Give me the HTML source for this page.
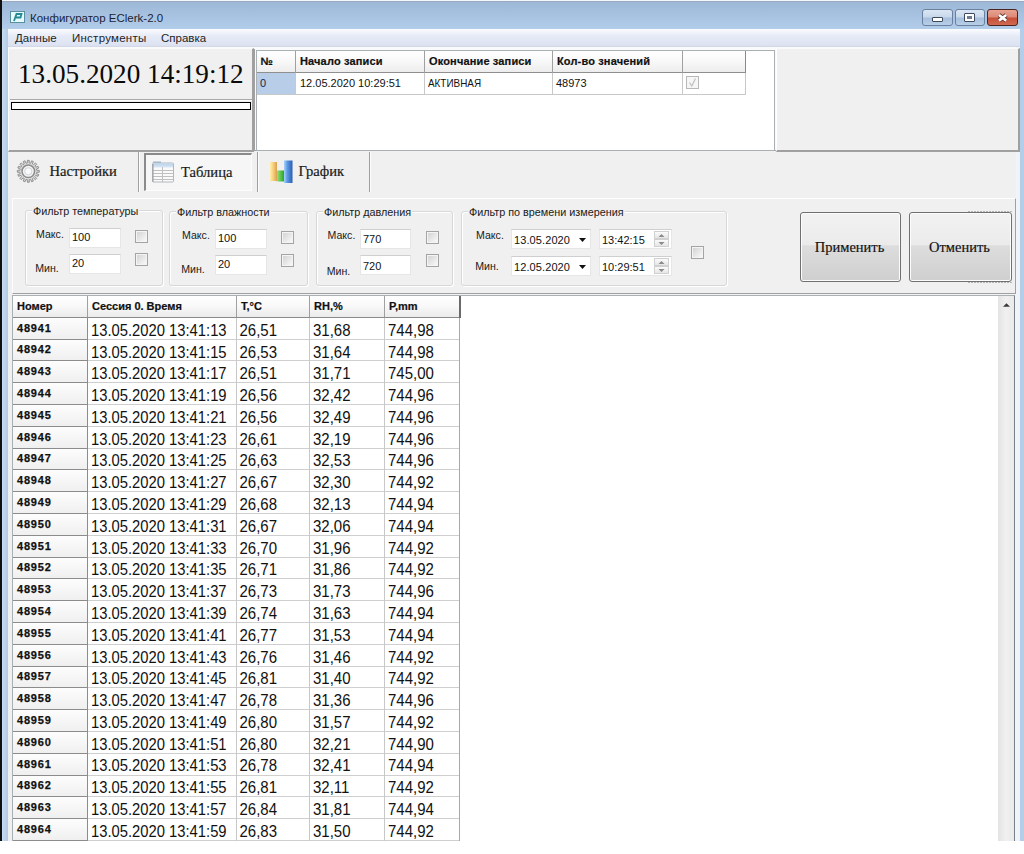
<!DOCTYPE html>
<html><head><meta charset="utf-8">
<style>
html,body{margin:0;padding:0;width:1024px;height:854px;overflow:hidden;background:#fff;position:relative}
.t{position:absolute;white-space:nowrap;line-height:1}
</style></head><body>
<div style="position:absolute;left:0px;top:0px;width:1024px;height:841px;background:#b4cde8"></div>
<div style="position:absolute;left:0px;top:0px;width:1.5px;height:841px;background:#111"></div>
<div style="position:absolute;left:2px;top:0px;width:1022px;height:29px;background:linear-gradient(#9db8d7 0,#9fbad8 15%,#aac6e4 70%,#b2cdea 100%)"></div>
<div style="position:absolute;left:2px;top:0px;width:1022px;height:1px;background:#f4f7fb"></div>
<div style="position:absolute;left:2px;top:1px;width:1022px;height:1px;background:#98a9bf"></div>
<div style="position:absolute;left:2px;top:29px;width:6px;height:812px;background:linear-gradient(90deg,#c8dcf0,#b2cae6)"></div>
<div style="position:absolute;left:1016px;top:29px;width:8px;height:812px;background:linear-gradient(90deg,#f2f5fa 0,#eef3f9 4px,#b4cde8 4px)"></div>
<div style="position:absolute;left:10px;top:11px;width:15px;height:12px;background:#e6fafd;border:1px solid #5a8fa0;box-sizing:border-box"></div>
<svg style="position:absolute;left:11px;top:12px" width="13" height="10"><path d="M3 9 L5.5 2 L10.5 2 L9.5 5.5 L5 5.5" fill="none" stroke="#258a92" stroke-width="1.8"/></svg>
<div class="t" style="left:30px;top:12.57px;font-family:'Liberation Sans', sans-serif;font-size:11.5px;font-weight:normal;color:#1b2433;">Конфигуратор EClerk-2.0</div>
<div style="position:absolute;left:922px;top:9px;width:31px;height:17px;box-sizing:border-box;border:1px solid #6a80a0;border-radius:3px;background:linear-gradient(#dbe6f3,#c9d9ec 45%,#a7bfdc 55%,#b9cfe8)"></div>
<div style="position:absolute;left:955px;top:9px;width:30px;height:17px;box-sizing:border-box;border:1px solid #6a80a0;border-radius:3px;background:linear-gradient(#dbe6f3,#c9d9ec 45%,#a7bfdc 55%,#b9cfe8)"></div>
<div style="position:absolute;left:987px;top:9px;width:31px;height:17px;box-sizing:border-box;border:1px solid #4a2420;border-radius:3px;background:linear-gradient(#e8a292,#dc8a76 45%,#c65038 55%,#d26a52)"></div>
<div style="position:absolute;left:932px;top:17px;width:11px;height:5px;background:#fff;border:1px solid #3c4a5e;box-sizing:border-box;border-radius:1px"></div>
<div style="position:absolute;left:964px;top:13px;width:11px;height:9px;background:#fff;border:1px solid #3c4a5e;box-sizing:border-box;border-radius:1px"></div>
<div style="position:absolute;left:967px;top:16px;width:5px;height:3px;background:#6e7c90"></div>
<svg style="position:absolute;left:994px;top:10px" width="17" height="15"><path d="M5 5 L12.2 10.6 M12.2 5 L5 10.6" stroke="#5a3028" stroke-width="4.2"/><path d="M5 5 L12.2 10.6 M12.2 5 L5 10.6" stroke="#fff" stroke-width="2.6"/></svg>
<div style="position:absolute;left:8px;top:29px;width:1012px;height:18px;background:linear-gradient(#fbfcfe 0,#f3f5fb 15%,#e6eaf6 40%,#dde3f2 90%,#cfd4e2 100%)"></div>
<div class="t" style="left:15px;top:33.27px;font-family:'Liberation Sans', sans-serif;font-size:11.5px;font-weight:normal;color:#1e1e1e;">Данные</div>
<div class="t" style="left:72px;top:33.27px;font-family:'Liberation Sans', sans-serif;font-size:11.5px;font-weight:normal;color:#1e1e1e;letter-spacing:0.25px">Инструменты</div>
<div class="t" style="left:161px;top:33.27px;font-family:'Liberation Sans', sans-serif;font-size:11.5px;font-weight:normal;color:#1e1e1e;">Справка</div>
<div style="position:absolute;left:8px;top:47px;width:1008px;height:794px;background:#f0f0f0"></div>
<div style="position:absolute;left:8px;top:47px;width:1008px;height:3px;background:#fafafa"></div>
<div style="position:absolute;left:8px;top:48px;width:246px;height:104px;box-sizing:border-box;border-left:1px solid #fff;border-top:1px solid #fafafa;border-right:2px solid #a0a0a0;border-bottom:2px solid #a0a0a0;background:#f0f0f0"></div>
<div class="t" style="left:17.9px;top:59.97px;font-family:'Liberation Serif', serif;font-size:27.5px;font-weight:normal;color:#0a0a0a;transform:scaleX(0.988);transform-origin:0 0">13.05.2020 14:19:12</div>
<div style="position:absolute;left:10px;top:99px;width:242px;height:1px;background:#a8a8a8"></div>
<div style="position:absolute;left:10px;top:100px;width:242px;height:1px;background:#fff"></div>
<div style="position:absolute;left:11px;top:102px;width:240px;height:8px;box-sizing:border-box;border:1px solid #000;background:#fff"></div>
<div style="position:absolute;left:254px;top:49px;width:522px;height:102px;box-sizing:border-box;border-left:1px solid #a0a0a0;border-bottom:1px solid #a0a0a0;background:#fafafa"></div>
<div style="position:absolute;left:256px;top:50px;width:519px;height:101px;box-sizing:border-box;border:1px solid #a8b0b4;background:#fff"></div>
<div style="position:absolute;left:776px;top:48px;width:244px;height:104px;box-sizing:border-box;border-left:1px solid #fff;border-top:1px solid #fafafa;border-right:2px solid #a0a0a0;border-bottom:2px solid #a0a0a0;background:#f0f0f0"></div>
<div style="position:absolute;left:257px;top:51px;width:489px;height:21px;background:linear-gradient(#ffffff,#f8f8f8 50%,#ededed)"></div>
<div style="position:absolute;left:257px;top:72px;width:489px;height:1px;background:#8f8f8f"></div>
<div class="t" style="left:260.5px;top:55.89px;font-family:'Liberation Sans', sans-serif;font-size:11px;font-weight:bold;color:#101010;letter-spacing:0.15px;-webkit-text-stroke:0.2px #101010">№</div>
<div style="position:absolute;left:295px;top:51px;width:1px;height:22px;background:#a0a0a0"></div>
<div class="t" style="left:300px;top:55.89px;font-family:'Liberation Sans', sans-serif;font-size:11px;font-weight:bold;color:#101010;letter-spacing:0.15px;-webkit-text-stroke:0.2px #101010">Начало записи</div>
<div style="position:absolute;left:424px;top:51px;width:1px;height:22px;background:#a0a0a0"></div>
<div class="t" style="left:429px;top:55.89px;font-family:'Liberation Sans', sans-serif;font-size:11px;font-weight:bold;color:#101010;letter-spacing:0.15px;-webkit-text-stroke:0.2px #101010">Окончание записи</div>
<div style="position:absolute;left:552px;top:51px;width:1px;height:22px;background:#a0a0a0"></div>
<div class="t" style="left:557px;top:55.89px;font-family:'Liberation Sans', sans-serif;font-size:11px;font-weight:bold;color:#101010;letter-spacing:0.15px;-webkit-text-stroke:0.2px #101010">Кол-во значений</div>
<div style="position:absolute;left:682px;top:51px;width:1px;height:22px;background:#a0a0a0"></div>
<div class="t" style="left:687px;top:55.89px;font-family:'Liberation Sans', sans-serif;font-size:11px;font-weight:bold;color:#101010;letter-spacing:0.15px;-webkit-text-stroke:0.2px #101010"></div>
<div style="position:absolute;left:745px;top:51px;width:1px;height:22px;background:#8a8a8a"></div>
<div style="position:absolute;left:257px;top:73px;width:39px;height:21px;background:#b7cde8"></div>
<div style="position:absolute;left:257px;top:94px;width:489px;height:1px;background:#c8c8c8"></div>
<div style="position:absolute;left:295px;top:73px;width:1px;height:21px;background:#c8c8c8"></div>
<div style="position:absolute;left:424px;top:73px;width:1px;height:21px;background:#c8c8c8"></div>
<div style="position:absolute;left:552px;top:73px;width:1px;height:21px;background:#c8c8c8"></div>
<div style="position:absolute;left:682px;top:73px;width:1px;height:21px;background:#c8c8c8"></div>
<div style="position:absolute;left:745px;top:73px;width:1px;height:21px;background:#c8c8c8"></div>
<div class="t" style="left:260px;top:77.89px;font-family:'Liberation Sans', sans-serif;font-size:11px;font-weight:normal;color:#14284a;">0</div>
<div class="t" style="left:300px;top:77.89px;font-family:'Liberation Sans', sans-serif;font-size:11px;font-weight:normal;color:#111;">12.05.2020 10:29:51</div>
<div class="t" style="left:428px;top:77.89px;font-family:'Liberation Sans', sans-serif;font-size:11px;font-weight:normal;color:#111;transform:scaleX(0.9);transform-origin:0 0">АКТИВНАЯ</div>
<div class="t" style="left:556px;top:77.89px;font-family:'Liberation Sans', sans-serif;font-size:11px;font-weight:normal;color:#111;">48973</div>
<div style="position:absolute;left:686px;top:76px;width:13px;height:13px;box-sizing:border-box;border:1px solid #b8b8b8;background:#f6f6f6"></div>
<svg style="position:absolute;left:686px;top:76px" width="13" height="13"><path d="M3.5 6.5 L5.8 10 L9.5 2.5" fill="none" stroke="#c0c0c0" stroke-width="1.2"/></svg>
<svg style="position:absolute;left:16px;top:159px" width="25" height="25" viewBox="0 0 25 25">
<defs><radialGradient id="gr"><stop offset="0.3" stop-color="#f8f8f8"/><stop offset="1" stop-color="#c8c8c8"/></radialGradient></defs>
<g transform="translate(12.3,12.3)">
<path d="M-0.99,-8.34 L-0.95,-10.96 L0.95,-10.96 L0.99,-8.34 L2.28,-8.08 L3.32,-10.49 L5.07,-9.76 L4.10,-7.33 L5.20,-6.60 L7.08,-8.42 L8.42,-7.08 L6.60,-5.20 L7.33,-4.10 L9.76,-5.07 L10.49,-3.32 L8.08,-2.28 L8.34,-0.99 L10.96,-0.95 L10.96,0.95 L8.34,0.99 L8.08,2.28 L10.49,3.32 L9.76,5.07 L7.33,4.10 L6.60,5.20 L8.42,7.08 L7.08,8.42 L5.20,6.60 L4.10,7.33 L5.07,9.76 L3.32,10.49 L2.28,8.08 L0.99,8.34 L0.95,10.96 L-0.95,10.96 L-0.99,8.34 L-2.28,8.08 L-3.32,10.49 L-5.07,9.76 L-4.10,7.33 L-5.20,6.60 L-7.08,8.42 L-8.42,7.08 L-6.60,5.20 L-7.33,4.10 L-9.76,5.07 L-10.49,3.32 L-8.08,2.28 L-8.34,0.99 L-10.96,0.95 L-10.96,-0.95 L-8.34,-0.99 L-8.08,-2.28 L-10.49,-3.32 L-9.76,-5.07 L-7.33,-4.10 L-6.60,-5.20 L-8.42,-7.08 L-7.08,-8.42 L-5.20,-6.60 L-4.10,-7.33 L-5.07,-9.76 L-3.32,-10.49 L-2.28,-8.08 Z" fill="url(#gr)" stroke="#8a8a8a" stroke-width="0.9"/>
<circle r="6.3" fill="#f2f4f6" stroke="#8c8c8c" stroke-width="1.5"/>
<circle r="3.6" fill="#fafafa" stroke="#d0d4d8" stroke-width="1"/>
</g></svg>
<div class="t" style="left:49.5px;top:163.77px;font-family:'Liberation Serif', serif;font-size:14.6px;font-weight:normal;color:#1a1a1a;-webkit-text-stroke:0.2px #1a1a1a">Настройки</div>
<div style="position:absolute;left:138px;top:152px;width:1px;height:40px;background:#a0a0a0"></div>
<div style="position:absolute;left:139px;top:152px;width:1px;height:40px;background:#fcfcfc"></div>
<div style="position:absolute;left:144px;top:153px;width:108px;height:38px;box-sizing:border-box;border-left:2px solid #8a8a8a;border-top:2px solid #8a8a8a;border-right:1px solid #fcfcfc;border-bottom:1px solid #fcfcfc;background:#f6f6f6"></div>
<svg style="position:absolute;left:152px;top:161px" width="23" height="23" viewBox="0 0 23 23">
<defs><linearGradient id="tg" x1="0" y1="0" x2="0" y2="1"><stop offset="0" stop-color="#b8d2ec"/><stop offset="1" stop-color="#dce8f4"/></linearGradient></defs>
<rect x="1" y="0.5" width="8" height="2" fill="#9fb5c9"/>
<rect x="0.5" y="2" width="21" height="19" rx="1" fill="#fafafa" stroke="#b0b8c0"/>
<rect x="1" y="2.5" width="20" height="4" fill="url(#tg)"/>
<path d="M1 9.5 H21 M1 12.5 H21 M1 15.5 H21 M1 18.5 H21 M10.5 6 V21" stroke="#c0c0c0" stroke-width="1"/><path d="M1 3 V21" stroke="#9a9a9a" stroke-width="1"/>
</svg>
<div class="t" style="left:181px;top:164.77px;font-family:'Liberation Serif', serif;font-size:14.6px;font-weight:normal;color:#1a1a1a;-webkit-text-stroke:0.2px #1a1a1a">Таблица</div>
<div style="position:absolute;left:257px;top:152px;width:1px;height:40px;background:#a0a0a0"></div>
<div style="position:absolute;left:258px;top:152px;width:1px;height:40px;background:#fcfcfc"></div>
<svg style="position:absolute;left:269px;top:159px" width="25" height="25" viewBox="0 0 25 25">
<defs>
<linearGradient id="gy" x1="0" x2="1"><stop offset="0" stop-color="#fff0b0"/><stop offset="0.5" stop-color="#f6cc78"/><stop offset="1" stop-color="#d8a050"/></linearGradient>
<linearGradient id="gg" x1="0" x2="1"><stop offset="0" stop-color="#94e278"/><stop offset="1" stop-color="#2aa428"/></linearGradient>
<linearGradient id="gb" x1="0" x2="1"><stop offset="0" stop-color="#a8d4fa"/><stop offset="0.4" stop-color="#5a98e4"/><stop offset="1" stop-color="#2a5cb0"/></linearGradient>
</defs>
<rect x="1" y="3" width="7" height="19" fill="url(#gy)"/>
<rect x="8" y="11.5" width="7" height="11" fill="url(#gg)"/>
<rect x="15" y="1.5" width="8.5" height="22.5" fill="url(#gb)"/>
</svg>
<div class="t" style="left:298.5px;top:163.77px;font-family:'Liberation Serif', serif;font-size:14.6px;font-weight:normal;color:#1a1a1a;-webkit-text-stroke:0.2px #1a1a1a">График</div>
<div style="position:absolute;left:369px;top:152px;width:1px;height:40px;background:#a0a0a0"></div>
<div style="position:absolute;left:370px;top:152px;width:1px;height:40px;background:#fcfcfc"></div>
<div style="position:absolute;left:12px;top:198px;width:1004px;height:96px;box-sizing:border-box;border-left:1px solid #fff;border-top:1px solid #fff;border-right:1px solid #a0a0a0;border-bottom:1px solid #a0a0a0;background:#f0f0f0"></div>
<div style="position:absolute;left:25px;top:210px;width:138px;height:76px;box-sizing:border-box;border:1px solid #d8d8d8;border-radius:3px;box-shadow:inset 1px 1px 0 #fff,1px 1px 0 #fff"></div>
<div class="t" style="left:32px;top:206.46px;font-family:'Liberation Sans', sans-serif;font-size:10.8px;font-weight:normal;color:#1a1a1a;background:#f0f0f0;padding:0 1px">Фильтр температуры</div>
<div class="t" style="left:36px;top:229.23px;font-family:'Liberation Sans', sans-serif;font-size:10.6px;font-weight:normal;color:#1a1a1a;">Макс.</div>
<div class="t" style="left:35.2px;top:263.23px;font-family:'Liberation Sans', sans-serif;font-size:10.6px;font-weight:normal;color:#1a1a1a;">Мин.</div>
<div style="position:absolute;left:69px;top:228px;width:52px;height:20px;box-sizing:border-box;border:1px solid #e6e6e6;border-top-color:#cfcfcf;background:#fff"></div>
<div class="t" style="left:72px;top:232.39px;font-family:'Liberation Sans', sans-serif;font-size:11px;font-weight:normal;color:#111;">100</div>
<div style="position:absolute;left:69px;top:254px;width:52px;height:20px;box-sizing:border-box;border:1px solid #e6e6e6;border-top-color:#cfcfcf;background:#fff"></div>
<div class="t" style="left:72px;top:258.39px;font-family:'Liberation Sans', sans-serif;font-size:11px;font-weight:normal;color:#111;">20</div>
<div style="position:absolute;left:135px;top:230px;width:13px;height:13px;box-sizing:border-box;border:1px solid #a4a4a4;background:#f4f4f4"></div>
<div style="position:absolute;left:137px;top:232px;width:9px;height:9px;background:linear-gradient(135deg,#d4d4d4,#f8f8f8)"></div>
<div style="position:absolute;left:135px;top:253px;width:13px;height:13px;box-sizing:border-box;border:1px solid #a4a4a4;background:#f4f4f4"></div>
<div style="position:absolute;left:137px;top:255px;width:9px;height:9px;background:linear-gradient(135deg,#d4d4d4,#f8f8f8)"></div>
<div style="position:absolute;left:169px;top:211px;width:139px;height:75px;box-sizing:border-box;border:1px solid #d8d8d8;border-radius:3px;box-shadow:inset 1px 1px 0 #fff,1px 1px 0 #fff"></div>
<div class="t" style="left:176px;top:207.26px;font-family:'Liberation Sans', sans-serif;font-size:10.8px;font-weight:normal;color:#1a1a1a;background:#f0f0f0;padding:0 1px">Фильтр влажности</div>
<div class="t" style="left:182px;top:230.13px;font-family:'Liberation Sans', sans-serif;font-size:10.6px;font-weight:normal;color:#1a1a1a;">Макс.</div>
<div class="t" style="left:181.2px;top:264.13px;font-family:'Liberation Sans', sans-serif;font-size:10.6px;font-weight:normal;color:#1a1a1a;">Мин.</div>
<div style="position:absolute;left:215px;top:229px;width:52px;height:20px;box-sizing:border-box;border:1px solid #e6e6e6;border-top-color:#cfcfcf;background:#fff"></div>
<div class="t" style="left:218px;top:233.39px;font-family:'Liberation Sans', sans-serif;font-size:11px;font-weight:normal;color:#111;">100</div>
<div style="position:absolute;left:215px;top:255px;width:52px;height:20px;box-sizing:border-box;border:1px solid #e6e6e6;border-top-color:#cfcfcf;background:#fff"></div>
<div class="t" style="left:218px;top:259.39px;font-family:'Liberation Sans', sans-serif;font-size:11px;font-weight:normal;color:#111;">20</div>
<div style="position:absolute;left:281px;top:231px;width:13px;height:13px;box-sizing:border-box;border:1px solid #a4a4a4;background:#f4f4f4"></div>
<div style="position:absolute;left:283px;top:233px;width:9px;height:9px;background:linear-gradient(135deg,#d4d4d4,#f8f8f8)"></div>
<div style="position:absolute;left:281px;top:254px;width:13px;height:13px;box-sizing:border-box;border:1px solid #a4a4a4;background:#f4f4f4"></div>
<div style="position:absolute;left:283px;top:256px;width:9px;height:9px;background:linear-gradient(135deg,#d4d4d4,#f8f8f8)"></div>
<div style="position:absolute;left:316px;top:211px;width:137px;height:75px;box-sizing:border-box;border:1px solid #d8d8d8;border-radius:3px;box-shadow:inset 1px 1px 0 #fff,1px 1px 0 #fff"></div>
<div class="t" style="left:323px;top:207.06px;font-family:'Liberation Sans', sans-serif;font-size:10.8px;font-weight:normal;color:#1a1a1a;background:#f0f0f0;padding:0 1px">Фильтр давления</div>
<div class="t" style="left:327.5px;top:229.73px;font-family:'Liberation Sans', sans-serif;font-size:10.6px;font-weight:normal;color:#1a1a1a;">Макс.</div>
<div class="t" style="left:326.7px;top:265.73px;font-family:'Liberation Sans', sans-serif;font-size:10.6px;font-weight:normal;color:#1a1a1a;">Мин.</div>
<div style="position:absolute;left:360px;top:229px;width:51px;height:20px;box-sizing:border-box;border:1px solid #e6e6e6;border-top-color:#cfcfcf;background:#fff"></div>
<div class="t" style="left:363px;top:234.09px;font-family:'Liberation Sans', sans-serif;font-size:11px;font-weight:normal;color:#111;">770</div>
<div style="position:absolute;left:360px;top:255px;width:51px;height:20px;box-sizing:border-box;border:1px solid #e6e6e6;border-top-color:#cfcfcf;background:#fff"></div>
<div class="t" style="left:363px;top:260.69px;font-family:'Liberation Sans', sans-serif;font-size:11px;font-weight:normal;color:#111;">720</div>
<div style="position:absolute;left:426px;top:231px;width:13px;height:13px;box-sizing:border-box;border:1px solid #a4a4a4;background:#f4f4f4"></div>
<div style="position:absolute;left:428px;top:233px;width:9px;height:9px;background:linear-gradient(135deg,#d4d4d4,#f8f8f8)"></div>
<div style="position:absolute;left:426px;top:254px;width:13px;height:13px;box-sizing:border-box;border:1px solid #a4a4a4;background:#f4f4f4"></div>
<div style="position:absolute;left:428px;top:256px;width:9px;height:9px;background:linear-gradient(135deg,#d4d4d4,#f8f8f8)"></div>
<div style="position:absolute;left:461px;top:211px;width:266px;height:75px;box-sizing:border-box;border:1px solid #d8d8d8;border-radius:3px;box-shadow:inset 1px 1px 0 #fff,1px 1px 0 #fff"></div>
<div class="t" style="left:468px;top:206.66px;font-family:'Liberation Sans', sans-serif;font-size:10.8px;font-weight:normal;color:#1a1a1a;background:#f0f0f0;padding:0 1px">Фильтр по времени измерения</div>
<div class="t" style="left:476px;top:230.03px;font-family:'Liberation Sans', sans-serif;font-size:10.6px;font-weight:normal;color:#1a1a1a;">Макс.</div>
<div class="t" style="left:475.2px;top:261.03px;font-family:'Liberation Sans', sans-serif;font-size:10.6px;font-weight:normal;color:#1a1a1a;">Мин.</div>
<div style="position:absolute;left:511px;top:229px;width:80px;height:20px;box-sizing:border-box;border:1px solid #e6e6e6;border-top-color:#cfcfcf;background:#fff"></div>
<div class="t" style="left:514px;top:234.89px;font-family:'Liberation Sans', sans-serif;font-size:11px;font-weight:normal;color:#111;letter-spacing:0.1px">13.05.2020</div>
<svg style="position:absolute;left:579px;top:238px" width="8" height="5"><path d="M0 0 H7 L3.5 4 Z" fill="#111"/></svg>
<div style="position:absolute;left:599px;top:229px;width:73px;height:20px;box-sizing:border-box;border:1px solid #e6e6e6;border-top-color:#cfcfcf;background:#fff"></div>
<div class="t" style="left:602px;top:234.89px;font-family:'Liberation Sans', sans-serif;font-size:11px;font-weight:normal;color:#111;">13:42:15</div>
<div style="position:absolute;left:654px;top:231px;width:15px;height:8px;box-sizing:border-box;border:1px solid #d0d0d0;background:linear-gradient(#fafafa,#e6e6e6)"></div>
<div style="position:absolute;left:654px;top:239px;width:15px;height:8px;box-sizing:border-box;border:1px solid #d0d0d0;background:linear-gradient(#fafafa,#e6e6e6)"></div>
<svg style="position:absolute;left:657px;top:232px" width="9" height="14"><path d="M1.5 5 H7.5 L4.5 2 Z M1.5 10 H7.5 L4.5 13 Z" fill="#8a8a8a"/></svg>
<div style="position:absolute;left:511px;top:256px;width:80px;height:20px;box-sizing:border-box;border:1px solid #e6e6e6;border-top-color:#cfcfcf;background:#fff"></div>
<div class="t" style="left:514px;top:261.89px;font-family:'Liberation Sans', sans-serif;font-size:11px;font-weight:normal;color:#111;letter-spacing:0.1px">12.05.2020</div>
<svg style="position:absolute;left:579px;top:265px" width="8" height="5"><path d="M0 0 H7 L3.5 4 Z" fill="#111"/></svg>
<div style="position:absolute;left:599px;top:256px;width:73px;height:20px;box-sizing:border-box;border:1px solid #e6e6e6;border-top-color:#cfcfcf;background:#fff"></div>
<div class="t" style="left:602px;top:261.89px;font-family:'Liberation Sans', sans-serif;font-size:11px;font-weight:normal;color:#111;">10:29:51</div>
<div style="position:absolute;left:654px;top:258px;width:15px;height:8px;box-sizing:border-box;border:1px solid #d0d0d0;background:linear-gradient(#fafafa,#e6e6e6)"></div>
<div style="position:absolute;left:654px;top:266px;width:15px;height:8px;box-sizing:border-box;border:1px solid #d0d0d0;background:linear-gradient(#fafafa,#e6e6e6)"></div>
<svg style="position:absolute;left:657px;top:259px" width="9" height="14"><path d="M1.5 5 H7.5 L4.5 2 Z M1.5 10 H7.5 L4.5 13 Z" fill="#8a8a8a"/></svg>
<div style="position:absolute;left:691px;top:246px;width:13px;height:13px;box-sizing:border-box;border:1px solid #a4a4a4;background:#f4f4f4"></div>
<div style="position:absolute;left:693px;top:248px;width:9px;height:9px;background:linear-gradient(135deg,#d4d4d4,#f8f8f8)"></div>
<div style="position:absolute;left:800px;top:212px;width:101px;height:70px;box-sizing:border-box;border:1px solid #707070;border-radius:3px;background:linear-gradient(#f2f2f2,#ebebeb 47%,#dddddd 48%,#cfcfcf);box-shadow:inset 0 0 0 1px #fcfcfc"></div>
<div class="t" style="left:849.5px;top:239.96px;font-family:'Liberation Serif', serif;font-size:14.5px;font-weight:normal;color:#111;transform:translateX(-50%);-webkit-text-stroke:0.15px #111">Применить</div>
<div style="position:absolute;left:909px;top:212px;width:103px;height:70px;box-sizing:border-box;border:1px solid #707070;border-radius:3px;background:linear-gradient(#f2f2f2,#ebebeb 47%,#dddddd 48%,#cfcfcf);box-shadow:inset 0 0 0 1px #fcfcfc"></div>
<div class="t" style="left:959.5px;top:239.96px;font-family:'Liberation Serif', serif;font-size:14.5px;font-weight:normal;color:#111;transform:translateX(-50%);-webkit-text-stroke:0.15px #111">Отменить</div>
<div style="position:absolute;left:968px;top:211px;width:44px;height:1px;background:repeating-linear-gradient(90deg,#b4b4b4 0,#b4b4b4 2px,transparent 2px,transparent 3px)"></div>
<div style="position:absolute;left:968px;top:282px;width:44px;height:1px;background:repeating-linear-gradient(90deg,#b4b4b4 0,#b4b4b4 2px,transparent 2px,transparent 3px)"></div>
<div style="position:absolute;left:12px;top:294px;width:1004px;height:547px;background:#f4f4f4"></div>
<div style="position:absolute;left:12px;top:295px;width:1003px;height:546px;box-sizing:border-box;border-left:1px solid #a8b0b4;border-top:1px solid #a8b0b4;border-right:1px solid #7a8088;background:#fff"></div>
<div style="position:absolute;left:13px;top:296px;width:447px;height:21px;background:linear-gradient(#ffffff,#f8f8f8 50%,#ebebeb)"></div>
<div style="position:absolute;left:13px;top:317px;width:447px;height:1px;background:#8a8a8a"></div>
<div class="t" style="left:17px;top:300.69px;font-family:'Liberation Sans', sans-serif;font-size:11px;font-weight:bold;color:#111;-webkit-text-stroke:0.2px #111">Номер</div>
<div style="position:absolute;left:87px;top:296px;width:1px;height:21px;background:#a0a0a0"></div>
<div class="t" style="left:92px;top:300.69px;font-family:'Liberation Sans', sans-serif;font-size:11px;font-weight:bold;color:#111;-webkit-text-stroke:0.2px #111">Сессия 0. Время</div>
<div style="position:absolute;left:236px;top:296px;width:1px;height:21px;background:#a0a0a0"></div>
<div class="t" style="left:241px;top:300.69px;font-family:'Liberation Sans', sans-serif;font-size:11px;font-weight:bold;color:#111;-webkit-text-stroke:0.2px #111">T,°C</div>
<div style="position:absolute;left:309px;top:296px;width:1px;height:21px;background:#a0a0a0"></div>
<div class="t" style="left:314px;top:300.69px;font-family:'Liberation Sans', sans-serif;font-size:11px;font-weight:bold;color:#111;-webkit-text-stroke:0.2px #111">RH,%</div>
<div style="position:absolute;left:384px;top:296px;width:1px;height:21px;background:#a0a0a0"></div>
<div class="t" style="left:389px;top:300.69px;font-family:'Liberation Sans', sans-serif;font-size:11px;font-weight:bold;color:#111;-webkit-text-stroke:0.2px #111">P,mm</div>
<div style="position:absolute;left:459px;top:296px;width:1.5px;height:22px;background:#6a6a6a"></div>
<div style="position:absolute;left:13px;top:317.70px;width:75px;height:21.8px;background:linear-gradient(#fdfdfd,#efefef)"></div>
<div style="position:absolute;left:88px;top:338.50px;width:372px;height:1px;background:#cfcfcf"></div>
<div style="position:absolute;left:13px;top:338.50px;width:75px;height:1px;background:#8c8c8c"></div>
<div class="t" style="left:17px;top:322.59px;font-family:'Liberation Sans', sans-serif;font-size:11px;font-weight:bold;color:#111;letter-spacing:0.8px;-webkit-text-stroke:0.25px #111">48941</div>
<div class="t" style="left:91px;top:322.80px;font-family:'Liberation Sans', sans-serif;font-size:15px;font-weight:normal;color:#111;transform-origin:0 12.7px;transform:scale(0.985,1.08)">13.05.2020 13:41:13</div>
<div class="t" style="left:239.5px;top:322.80px;font-family:'Liberation Sans', sans-serif;font-size:15px;font-weight:normal;color:#111;transform-origin:0 12.7px;transform:scaleY(1.08)">26,51</div>
<div class="t" style="left:313px;top:322.80px;font-family:'Liberation Sans', sans-serif;font-size:15px;font-weight:normal;color:#111;transform-origin:0 12.7px;transform:scaleY(1.08)">31,68</div>
<div class="t" style="left:388px;top:322.80px;font-family:'Liberation Sans', sans-serif;font-size:15px;font-weight:normal;color:#111;transform-origin:0 12.7px;transform:scaleY(1.08)">744,98</div>
<div style="position:absolute;left:13px;top:339.50px;width:75px;height:21.8px;background:linear-gradient(#fdfdfd,#efefef)"></div>
<div style="position:absolute;left:88px;top:360.30px;width:372px;height:1px;background:#cfcfcf"></div>
<div style="position:absolute;left:13px;top:360.30px;width:75px;height:1px;background:#8c8c8c"></div>
<div class="t" style="left:17px;top:344.39px;font-family:'Liberation Sans', sans-serif;font-size:11px;font-weight:bold;color:#111;letter-spacing:0.8px;-webkit-text-stroke:0.25px #111">48942</div>
<div class="t" style="left:91px;top:344.58px;font-family:'Liberation Sans', sans-serif;font-size:15px;font-weight:normal;color:#111;transform-origin:0 12.7px;transform:scale(0.985,1.08)">13.05.2020 13:41:15</div>
<div class="t" style="left:239.5px;top:344.58px;font-family:'Liberation Sans', sans-serif;font-size:15px;font-weight:normal;color:#111;transform-origin:0 12.7px;transform:scaleY(1.08)">26,53</div>
<div class="t" style="left:313px;top:344.58px;font-family:'Liberation Sans', sans-serif;font-size:15px;font-weight:normal;color:#111;transform-origin:0 12.7px;transform:scaleY(1.08)">31,64</div>
<div class="t" style="left:388px;top:344.58px;font-family:'Liberation Sans', sans-serif;font-size:15px;font-weight:normal;color:#111;transform-origin:0 12.7px;transform:scaleY(1.08)">744,98</div>
<div style="position:absolute;left:13px;top:361.30px;width:75px;height:21.8px;background:linear-gradient(#fdfdfd,#efefef)"></div>
<div style="position:absolute;left:88px;top:382.10px;width:372px;height:1px;background:#cfcfcf"></div>
<div style="position:absolute;left:13px;top:382.10px;width:75px;height:1px;background:#8c8c8c"></div>
<div class="t" style="left:17px;top:366.19px;font-family:'Liberation Sans', sans-serif;font-size:11px;font-weight:bold;color:#111;letter-spacing:0.8px;-webkit-text-stroke:0.25px #111">48943</div>
<div class="t" style="left:91px;top:366.36px;font-family:'Liberation Sans', sans-serif;font-size:15px;font-weight:normal;color:#111;transform-origin:0 12.7px;transform:scale(0.985,1.08)">13.05.2020 13:41:17</div>
<div class="t" style="left:239.5px;top:366.36px;font-family:'Liberation Sans', sans-serif;font-size:15px;font-weight:normal;color:#111;transform-origin:0 12.7px;transform:scaleY(1.08)">26,51</div>
<div class="t" style="left:313px;top:366.36px;font-family:'Liberation Sans', sans-serif;font-size:15px;font-weight:normal;color:#111;transform-origin:0 12.7px;transform:scaleY(1.08)">31,71</div>
<div class="t" style="left:388px;top:366.36px;font-family:'Liberation Sans', sans-serif;font-size:15px;font-weight:normal;color:#111;transform-origin:0 12.7px;transform:scaleY(1.08)">745,00</div>
<div style="position:absolute;left:13px;top:383.10px;width:75px;height:21.8px;background:linear-gradient(#fdfdfd,#efefef)"></div>
<div style="position:absolute;left:88px;top:403.90px;width:372px;height:1px;background:#cfcfcf"></div>
<div style="position:absolute;left:13px;top:403.90px;width:75px;height:1px;background:#8c8c8c"></div>
<div class="t" style="left:17px;top:387.99px;font-family:'Liberation Sans', sans-serif;font-size:11px;font-weight:bold;color:#111;letter-spacing:0.8px;-webkit-text-stroke:0.25px #111">48944</div>
<div class="t" style="left:91px;top:388.14px;font-family:'Liberation Sans', sans-serif;font-size:15px;font-weight:normal;color:#111;transform-origin:0 12.7px;transform:scale(0.985,1.08)">13.05.2020 13:41:19</div>
<div class="t" style="left:239.5px;top:388.14px;font-family:'Liberation Sans', sans-serif;font-size:15px;font-weight:normal;color:#111;transform-origin:0 12.7px;transform:scaleY(1.08)">26,56</div>
<div class="t" style="left:313px;top:388.14px;font-family:'Liberation Sans', sans-serif;font-size:15px;font-weight:normal;color:#111;transform-origin:0 12.7px;transform:scaleY(1.08)">32,42</div>
<div class="t" style="left:388px;top:388.14px;font-family:'Liberation Sans', sans-serif;font-size:15px;font-weight:normal;color:#111;transform-origin:0 12.7px;transform:scaleY(1.08)">744,96</div>
<div style="position:absolute;left:13px;top:404.90px;width:75px;height:21.8px;background:linear-gradient(#fdfdfd,#efefef)"></div>
<div style="position:absolute;left:88px;top:425.70px;width:372px;height:1px;background:#cfcfcf"></div>
<div style="position:absolute;left:13px;top:425.70px;width:75px;height:1px;background:#8c8c8c"></div>
<div class="t" style="left:17px;top:409.79px;font-family:'Liberation Sans', sans-serif;font-size:11px;font-weight:bold;color:#111;letter-spacing:0.8px;-webkit-text-stroke:0.25px #111">48945</div>
<div class="t" style="left:91px;top:409.92px;font-family:'Liberation Sans', sans-serif;font-size:15px;font-weight:normal;color:#111;transform-origin:0 12.7px;transform:scale(0.985,1.08)">13.05.2020 13:41:21</div>
<div class="t" style="left:239.5px;top:409.92px;font-family:'Liberation Sans', sans-serif;font-size:15px;font-weight:normal;color:#111;transform-origin:0 12.7px;transform:scaleY(1.08)">26,56</div>
<div class="t" style="left:313px;top:409.92px;font-family:'Liberation Sans', sans-serif;font-size:15px;font-weight:normal;color:#111;transform-origin:0 12.7px;transform:scaleY(1.08)">32,49</div>
<div class="t" style="left:388px;top:409.92px;font-family:'Liberation Sans', sans-serif;font-size:15px;font-weight:normal;color:#111;transform-origin:0 12.7px;transform:scaleY(1.08)">744,96</div>
<div style="position:absolute;left:13px;top:426.70px;width:75px;height:21.8px;background:linear-gradient(#fdfdfd,#efefef)"></div>
<div style="position:absolute;left:88px;top:447.50px;width:372px;height:1px;background:#cfcfcf"></div>
<div style="position:absolute;left:13px;top:447.50px;width:75px;height:1px;background:#8c8c8c"></div>
<div class="t" style="left:17px;top:431.59px;font-family:'Liberation Sans', sans-serif;font-size:11px;font-weight:bold;color:#111;letter-spacing:0.8px;-webkit-text-stroke:0.25px #111">48946</div>
<div class="t" style="left:91px;top:431.70px;font-family:'Liberation Sans', sans-serif;font-size:15px;font-weight:normal;color:#111;transform-origin:0 12.7px;transform:scale(0.985,1.08)">13.05.2020 13:41:23</div>
<div class="t" style="left:239.5px;top:431.70px;font-family:'Liberation Sans', sans-serif;font-size:15px;font-weight:normal;color:#111;transform-origin:0 12.7px;transform:scaleY(1.08)">26,61</div>
<div class="t" style="left:313px;top:431.70px;font-family:'Liberation Sans', sans-serif;font-size:15px;font-weight:normal;color:#111;transform-origin:0 12.7px;transform:scaleY(1.08)">32,19</div>
<div class="t" style="left:388px;top:431.70px;font-family:'Liberation Sans', sans-serif;font-size:15px;font-weight:normal;color:#111;transform-origin:0 12.7px;transform:scaleY(1.08)">744,96</div>
<div style="position:absolute;left:13px;top:448.50px;width:75px;height:21.8px;background:linear-gradient(#fdfdfd,#efefef)"></div>
<div style="position:absolute;left:88px;top:469.30px;width:372px;height:1px;background:#cfcfcf"></div>
<div style="position:absolute;left:13px;top:469.30px;width:75px;height:1px;background:#8c8c8c"></div>
<div class="t" style="left:17px;top:453.39px;font-family:'Liberation Sans', sans-serif;font-size:11px;font-weight:bold;color:#111;letter-spacing:0.8px;-webkit-text-stroke:0.25px #111">48947</div>
<div class="t" style="left:91px;top:453.48px;font-family:'Liberation Sans', sans-serif;font-size:15px;font-weight:normal;color:#111;transform-origin:0 12.7px;transform:scale(0.985,1.08)">13.05.2020 13:41:25</div>
<div class="t" style="left:239.5px;top:453.48px;font-family:'Liberation Sans', sans-serif;font-size:15px;font-weight:normal;color:#111;transform-origin:0 12.7px;transform:scaleY(1.08)">26,63</div>
<div class="t" style="left:313px;top:453.48px;font-family:'Liberation Sans', sans-serif;font-size:15px;font-weight:normal;color:#111;transform-origin:0 12.7px;transform:scaleY(1.08)">32,53</div>
<div class="t" style="left:388px;top:453.48px;font-family:'Liberation Sans', sans-serif;font-size:15px;font-weight:normal;color:#111;transform-origin:0 12.7px;transform:scaleY(1.08)">744,96</div>
<div style="position:absolute;left:13px;top:470.30px;width:75px;height:21.8px;background:linear-gradient(#fdfdfd,#efefef)"></div>
<div style="position:absolute;left:88px;top:491.10px;width:372px;height:1px;background:#cfcfcf"></div>
<div style="position:absolute;left:13px;top:491.10px;width:75px;height:1px;background:#8c8c8c"></div>
<div class="t" style="left:17px;top:475.19px;font-family:'Liberation Sans', sans-serif;font-size:11px;font-weight:bold;color:#111;letter-spacing:0.8px;-webkit-text-stroke:0.25px #111">48948</div>
<div class="t" style="left:91px;top:475.26px;font-family:'Liberation Sans', sans-serif;font-size:15px;font-weight:normal;color:#111;transform-origin:0 12.7px;transform:scale(0.985,1.08)">13.05.2020 13:41:27</div>
<div class="t" style="left:239.5px;top:475.26px;font-family:'Liberation Sans', sans-serif;font-size:15px;font-weight:normal;color:#111;transform-origin:0 12.7px;transform:scaleY(1.08)">26,67</div>
<div class="t" style="left:313px;top:475.26px;font-family:'Liberation Sans', sans-serif;font-size:15px;font-weight:normal;color:#111;transform-origin:0 12.7px;transform:scaleY(1.08)">32,30</div>
<div class="t" style="left:388px;top:475.26px;font-family:'Liberation Sans', sans-serif;font-size:15px;font-weight:normal;color:#111;transform-origin:0 12.7px;transform:scaleY(1.08)">744,92</div>
<div style="position:absolute;left:13px;top:492.10px;width:75px;height:21.8px;background:linear-gradient(#fdfdfd,#efefef)"></div>
<div style="position:absolute;left:88px;top:512.90px;width:372px;height:1px;background:#cfcfcf"></div>
<div style="position:absolute;left:13px;top:512.90px;width:75px;height:1px;background:#8c8c8c"></div>
<div class="t" style="left:17px;top:496.99px;font-family:'Liberation Sans', sans-serif;font-size:11px;font-weight:bold;color:#111;letter-spacing:0.8px;-webkit-text-stroke:0.25px #111">48949</div>
<div class="t" style="left:91px;top:497.04px;font-family:'Liberation Sans', sans-serif;font-size:15px;font-weight:normal;color:#111;transform-origin:0 12.7px;transform:scale(0.985,1.08)">13.05.2020 13:41:29</div>
<div class="t" style="left:239.5px;top:497.04px;font-family:'Liberation Sans', sans-serif;font-size:15px;font-weight:normal;color:#111;transform-origin:0 12.7px;transform:scaleY(1.08)">26,68</div>
<div class="t" style="left:313px;top:497.04px;font-family:'Liberation Sans', sans-serif;font-size:15px;font-weight:normal;color:#111;transform-origin:0 12.7px;transform:scaleY(1.08)">32,13</div>
<div class="t" style="left:388px;top:497.04px;font-family:'Liberation Sans', sans-serif;font-size:15px;font-weight:normal;color:#111;transform-origin:0 12.7px;transform:scaleY(1.08)">744,94</div>
<div style="position:absolute;left:13px;top:513.90px;width:75px;height:21.8px;background:linear-gradient(#fdfdfd,#efefef)"></div>
<div style="position:absolute;left:88px;top:534.70px;width:372px;height:1px;background:#cfcfcf"></div>
<div style="position:absolute;left:13px;top:534.70px;width:75px;height:1px;background:#8c8c8c"></div>
<div class="t" style="left:17px;top:518.79px;font-family:'Liberation Sans', sans-serif;font-size:11px;font-weight:bold;color:#111;letter-spacing:0.8px;-webkit-text-stroke:0.25px #111">48950</div>
<div class="t" style="left:91px;top:518.82px;font-family:'Liberation Sans', sans-serif;font-size:15px;font-weight:normal;color:#111;transform-origin:0 12.7px;transform:scale(0.985,1.08)">13.05.2020 13:41:31</div>
<div class="t" style="left:239.5px;top:518.82px;font-family:'Liberation Sans', sans-serif;font-size:15px;font-weight:normal;color:#111;transform-origin:0 12.7px;transform:scaleY(1.08)">26,67</div>
<div class="t" style="left:313px;top:518.82px;font-family:'Liberation Sans', sans-serif;font-size:15px;font-weight:normal;color:#111;transform-origin:0 12.7px;transform:scaleY(1.08)">32,06</div>
<div class="t" style="left:388px;top:518.82px;font-family:'Liberation Sans', sans-serif;font-size:15px;font-weight:normal;color:#111;transform-origin:0 12.7px;transform:scaleY(1.08)">744,94</div>
<div style="position:absolute;left:13px;top:535.70px;width:75px;height:21.8px;background:linear-gradient(#fdfdfd,#efefef)"></div>
<div style="position:absolute;left:88px;top:556.50px;width:372px;height:1px;background:#cfcfcf"></div>
<div style="position:absolute;left:13px;top:556.50px;width:75px;height:1px;background:#8c8c8c"></div>
<div class="t" style="left:17px;top:540.59px;font-family:'Liberation Sans', sans-serif;font-size:11px;font-weight:bold;color:#111;letter-spacing:0.8px;-webkit-text-stroke:0.25px #111">48951</div>
<div class="t" style="left:91px;top:540.60px;font-family:'Liberation Sans', sans-serif;font-size:15px;font-weight:normal;color:#111;transform-origin:0 12.7px;transform:scale(0.985,1.08)">13.05.2020 13:41:33</div>
<div class="t" style="left:239.5px;top:540.60px;font-family:'Liberation Sans', sans-serif;font-size:15px;font-weight:normal;color:#111;transform-origin:0 12.7px;transform:scaleY(1.08)">26,70</div>
<div class="t" style="left:313px;top:540.60px;font-family:'Liberation Sans', sans-serif;font-size:15px;font-weight:normal;color:#111;transform-origin:0 12.7px;transform:scaleY(1.08)">31,96</div>
<div class="t" style="left:388px;top:540.60px;font-family:'Liberation Sans', sans-serif;font-size:15px;font-weight:normal;color:#111;transform-origin:0 12.7px;transform:scaleY(1.08)">744,92</div>
<div style="position:absolute;left:13px;top:557.50px;width:75px;height:21.8px;background:linear-gradient(#fdfdfd,#efefef)"></div>
<div style="position:absolute;left:88px;top:578.30px;width:372px;height:1px;background:#cfcfcf"></div>
<div style="position:absolute;left:13px;top:578.30px;width:75px;height:1px;background:#8c8c8c"></div>
<div class="t" style="left:17px;top:562.39px;font-family:'Liberation Sans', sans-serif;font-size:11px;font-weight:bold;color:#111;letter-spacing:0.8px;-webkit-text-stroke:0.25px #111">48952</div>
<div class="t" style="left:91px;top:562.38px;font-family:'Liberation Sans', sans-serif;font-size:15px;font-weight:normal;color:#111;transform-origin:0 12.7px;transform:scale(0.985,1.08)">13.05.2020 13:41:35</div>
<div class="t" style="left:239.5px;top:562.38px;font-family:'Liberation Sans', sans-serif;font-size:15px;font-weight:normal;color:#111;transform-origin:0 12.7px;transform:scaleY(1.08)">26,71</div>
<div class="t" style="left:313px;top:562.38px;font-family:'Liberation Sans', sans-serif;font-size:15px;font-weight:normal;color:#111;transform-origin:0 12.7px;transform:scaleY(1.08)">31,86</div>
<div class="t" style="left:388px;top:562.38px;font-family:'Liberation Sans', sans-serif;font-size:15px;font-weight:normal;color:#111;transform-origin:0 12.7px;transform:scaleY(1.08)">744,92</div>
<div style="position:absolute;left:13px;top:579.30px;width:75px;height:21.8px;background:linear-gradient(#fdfdfd,#efefef)"></div>
<div style="position:absolute;left:88px;top:600.10px;width:372px;height:1px;background:#cfcfcf"></div>
<div style="position:absolute;left:13px;top:600.10px;width:75px;height:1px;background:#8c8c8c"></div>
<div class="t" style="left:17px;top:584.19px;font-family:'Liberation Sans', sans-serif;font-size:11px;font-weight:bold;color:#111;letter-spacing:0.8px;-webkit-text-stroke:0.25px #111">48953</div>
<div class="t" style="left:91px;top:584.16px;font-family:'Liberation Sans', sans-serif;font-size:15px;font-weight:normal;color:#111;transform-origin:0 12.7px;transform:scale(0.985,1.08)">13.05.2020 13:41:37</div>
<div class="t" style="left:239.5px;top:584.16px;font-family:'Liberation Sans', sans-serif;font-size:15px;font-weight:normal;color:#111;transform-origin:0 12.7px;transform:scaleY(1.08)">26,73</div>
<div class="t" style="left:313px;top:584.16px;font-family:'Liberation Sans', sans-serif;font-size:15px;font-weight:normal;color:#111;transform-origin:0 12.7px;transform:scaleY(1.08)">31,73</div>
<div class="t" style="left:388px;top:584.16px;font-family:'Liberation Sans', sans-serif;font-size:15px;font-weight:normal;color:#111;transform-origin:0 12.7px;transform:scaleY(1.08)">744,96</div>
<div style="position:absolute;left:13px;top:601.10px;width:75px;height:21.8px;background:linear-gradient(#fdfdfd,#efefef)"></div>
<div style="position:absolute;left:88px;top:621.90px;width:372px;height:1px;background:#cfcfcf"></div>
<div style="position:absolute;left:13px;top:621.90px;width:75px;height:1px;background:#8c8c8c"></div>
<div class="t" style="left:17px;top:605.99px;font-family:'Liberation Sans', sans-serif;font-size:11px;font-weight:bold;color:#111;letter-spacing:0.8px;-webkit-text-stroke:0.25px #111">48954</div>
<div class="t" style="left:91px;top:605.94px;font-family:'Liberation Sans', sans-serif;font-size:15px;font-weight:normal;color:#111;transform-origin:0 12.7px;transform:scale(0.985,1.08)">13.05.2020 13:41:39</div>
<div class="t" style="left:239.5px;top:605.94px;font-family:'Liberation Sans', sans-serif;font-size:15px;font-weight:normal;color:#111;transform-origin:0 12.7px;transform:scaleY(1.08)">26,74</div>
<div class="t" style="left:313px;top:605.94px;font-family:'Liberation Sans', sans-serif;font-size:15px;font-weight:normal;color:#111;transform-origin:0 12.7px;transform:scaleY(1.08)">31,63</div>
<div class="t" style="left:388px;top:605.94px;font-family:'Liberation Sans', sans-serif;font-size:15px;font-weight:normal;color:#111;transform-origin:0 12.7px;transform:scaleY(1.08)">744,94</div>
<div style="position:absolute;left:13px;top:622.90px;width:75px;height:21.8px;background:linear-gradient(#fdfdfd,#efefef)"></div>
<div style="position:absolute;left:88px;top:643.70px;width:372px;height:1px;background:#cfcfcf"></div>
<div style="position:absolute;left:13px;top:643.70px;width:75px;height:1px;background:#8c8c8c"></div>
<div class="t" style="left:17px;top:627.79px;font-family:'Liberation Sans', sans-serif;font-size:11px;font-weight:bold;color:#111;letter-spacing:0.8px;-webkit-text-stroke:0.25px #111">48955</div>
<div class="t" style="left:91px;top:627.72px;font-family:'Liberation Sans', sans-serif;font-size:15px;font-weight:normal;color:#111;transform-origin:0 12.7px;transform:scale(0.985,1.08)">13.05.2020 13:41:41</div>
<div class="t" style="left:239.5px;top:627.72px;font-family:'Liberation Sans', sans-serif;font-size:15px;font-weight:normal;color:#111;transform-origin:0 12.7px;transform:scaleY(1.08)">26,77</div>
<div class="t" style="left:313px;top:627.72px;font-family:'Liberation Sans', sans-serif;font-size:15px;font-weight:normal;color:#111;transform-origin:0 12.7px;transform:scaleY(1.08)">31,53</div>
<div class="t" style="left:388px;top:627.72px;font-family:'Liberation Sans', sans-serif;font-size:15px;font-weight:normal;color:#111;transform-origin:0 12.7px;transform:scaleY(1.08)">744,94</div>
<div style="position:absolute;left:13px;top:644.70px;width:75px;height:21.8px;background:linear-gradient(#fdfdfd,#efefef)"></div>
<div style="position:absolute;left:88px;top:665.50px;width:372px;height:1px;background:#cfcfcf"></div>
<div style="position:absolute;left:13px;top:665.50px;width:75px;height:1px;background:#8c8c8c"></div>
<div class="t" style="left:17px;top:649.59px;font-family:'Liberation Sans', sans-serif;font-size:11px;font-weight:bold;color:#111;letter-spacing:0.8px;-webkit-text-stroke:0.25px #111">48956</div>
<div class="t" style="left:91px;top:649.50px;font-family:'Liberation Sans', sans-serif;font-size:15px;font-weight:normal;color:#111;transform-origin:0 12.7px;transform:scale(0.985,1.08)">13.05.2020 13:41:43</div>
<div class="t" style="left:239.5px;top:649.50px;font-family:'Liberation Sans', sans-serif;font-size:15px;font-weight:normal;color:#111;transform-origin:0 12.7px;transform:scaleY(1.08)">26,76</div>
<div class="t" style="left:313px;top:649.50px;font-family:'Liberation Sans', sans-serif;font-size:15px;font-weight:normal;color:#111;transform-origin:0 12.7px;transform:scaleY(1.08)">31,46</div>
<div class="t" style="left:388px;top:649.50px;font-family:'Liberation Sans', sans-serif;font-size:15px;font-weight:normal;color:#111;transform-origin:0 12.7px;transform:scaleY(1.08)">744,92</div>
<div style="position:absolute;left:13px;top:666.50px;width:75px;height:21.8px;background:linear-gradient(#fdfdfd,#efefef)"></div>
<div style="position:absolute;left:88px;top:687.30px;width:372px;height:1px;background:#cfcfcf"></div>
<div style="position:absolute;left:13px;top:687.30px;width:75px;height:1px;background:#8c8c8c"></div>
<div class="t" style="left:17px;top:671.39px;font-family:'Liberation Sans', sans-serif;font-size:11px;font-weight:bold;color:#111;letter-spacing:0.8px;-webkit-text-stroke:0.25px #111">48957</div>
<div class="t" style="left:91px;top:671.28px;font-family:'Liberation Sans', sans-serif;font-size:15px;font-weight:normal;color:#111;transform-origin:0 12.7px;transform:scale(0.985,1.08)">13.05.2020 13:41:45</div>
<div class="t" style="left:239.5px;top:671.28px;font-family:'Liberation Sans', sans-serif;font-size:15px;font-weight:normal;color:#111;transform-origin:0 12.7px;transform:scaleY(1.08)">26,81</div>
<div class="t" style="left:313px;top:671.28px;font-family:'Liberation Sans', sans-serif;font-size:15px;font-weight:normal;color:#111;transform-origin:0 12.7px;transform:scaleY(1.08)">31,40</div>
<div class="t" style="left:388px;top:671.28px;font-family:'Liberation Sans', sans-serif;font-size:15px;font-weight:normal;color:#111;transform-origin:0 12.7px;transform:scaleY(1.08)">744,92</div>
<div style="position:absolute;left:13px;top:688.30px;width:75px;height:21.8px;background:linear-gradient(#fdfdfd,#efefef)"></div>
<div style="position:absolute;left:88px;top:709.10px;width:372px;height:1px;background:#cfcfcf"></div>
<div style="position:absolute;left:13px;top:709.10px;width:75px;height:1px;background:#8c8c8c"></div>
<div class="t" style="left:17px;top:693.19px;font-family:'Liberation Sans', sans-serif;font-size:11px;font-weight:bold;color:#111;letter-spacing:0.8px;-webkit-text-stroke:0.25px #111">48958</div>
<div class="t" style="left:91px;top:693.06px;font-family:'Liberation Sans', sans-serif;font-size:15px;font-weight:normal;color:#111;transform-origin:0 12.7px;transform:scale(0.985,1.08)">13.05.2020 13:41:47</div>
<div class="t" style="left:239.5px;top:693.06px;font-family:'Liberation Sans', sans-serif;font-size:15px;font-weight:normal;color:#111;transform-origin:0 12.7px;transform:scaleY(1.08)">26,78</div>
<div class="t" style="left:313px;top:693.06px;font-family:'Liberation Sans', sans-serif;font-size:15px;font-weight:normal;color:#111;transform-origin:0 12.7px;transform:scaleY(1.08)">31,36</div>
<div class="t" style="left:388px;top:693.06px;font-family:'Liberation Sans', sans-serif;font-size:15px;font-weight:normal;color:#111;transform-origin:0 12.7px;transform:scaleY(1.08)">744,96</div>
<div style="position:absolute;left:13px;top:710.10px;width:75px;height:21.8px;background:linear-gradient(#fdfdfd,#efefef)"></div>
<div style="position:absolute;left:88px;top:730.90px;width:372px;height:1px;background:#cfcfcf"></div>
<div style="position:absolute;left:13px;top:730.90px;width:75px;height:1px;background:#8c8c8c"></div>
<div class="t" style="left:17px;top:714.99px;font-family:'Liberation Sans', sans-serif;font-size:11px;font-weight:bold;color:#111;letter-spacing:0.8px;-webkit-text-stroke:0.25px #111">48959</div>
<div class="t" style="left:91px;top:714.84px;font-family:'Liberation Sans', sans-serif;font-size:15px;font-weight:normal;color:#111;transform-origin:0 12.7px;transform:scale(0.985,1.08)">13.05.2020 13:41:49</div>
<div class="t" style="left:239.5px;top:714.84px;font-family:'Liberation Sans', sans-serif;font-size:15px;font-weight:normal;color:#111;transform-origin:0 12.7px;transform:scaleY(1.08)">26,80</div>
<div class="t" style="left:313px;top:714.84px;font-family:'Liberation Sans', sans-serif;font-size:15px;font-weight:normal;color:#111;transform-origin:0 12.7px;transform:scaleY(1.08)">31,57</div>
<div class="t" style="left:388px;top:714.84px;font-family:'Liberation Sans', sans-serif;font-size:15px;font-weight:normal;color:#111;transform-origin:0 12.7px;transform:scaleY(1.08)">744,92</div>
<div style="position:absolute;left:13px;top:731.90px;width:75px;height:21.8px;background:linear-gradient(#fdfdfd,#efefef)"></div>
<div style="position:absolute;left:88px;top:752.70px;width:372px;height:1px;background:#cfcfcf"></div>
<div style="position:absolute;left:13px;top:752.70px;width:75px;height:1px;background:#8c8c8c"></div>
<div class="t" style="left:17px;top:736.79px;font-family:'Liberation Sans', sans-serif;font-size:11px;font-weight:bold;color:#111;letter-spacing:0.8px;-webkit-text-stroke:0.25px #111">48960</div>
<div class="t" style="left:91px;top:736.62px;font-family:'Liberation Sans', sans-serif;font-size:15px;font-weight:normal;color:#111;transform-origin:0 12.7px;transform:scale(0.985,1.08)">13.05.2020 13:41:51</div>
<div class="t" style="left:239.5px;top:736.62px;font-family:'Liberation Sans', sans-serif;font-size:15px;font-weight:normal;color:#111;transform-origin:0 12.7px;transform:scaleY(1.08)">26,80</div>
<div class="t" style="left:313px;top:736.62px;font-family:'Liberation Sans', sans-serif;font-size:15px;font-weight:normal;color:#111;transform-origin:0 12.7px;transform:scaleY(1.08)">32,21</div>
<div class="t" style="left:388px;top:736.62px;font-family:'Liberation Sans', sans-serif;font-size:15px;font-weight:normal;color:#111;transform-origin:0 12.7px;transform:scaleY(1.08)">744,90</div>
<div style="position:absolute;left:13px;top:753.70px;width:75px;height:21.8px;background:linear-gradient(#fdfdfd,#efefef)"></div>
<div style="position:absolute;left:88px;top:774.50px;width:372px;height:1px;background:#cfcfcf"></div>
<div style="position:absolute;left:13px;top:774.50px;width:75px;height:1px;background:#8c8c8c"></div>
<div class="t" style="left:17px;top:758.59px;font-family:'Liberation Sans', sans-serif;font-size:11px;font-weight:bold;color:#111;letter-spacing:0.8px;-webkit-text-stroke:0.25px #111">48961</div>
<div class="t" style="left:91px;top:758.40px;font-family:'Liberation Sans', sans-serif;font-size:15px;font-weight:normal;color:#111;transform-origin:0 12.7px;transform:scale(0.985,1.08)">13.05.2020 13:41:53</div>
<div class="t" style="left:239.5px;top:758.40px;font-family:'Liberation Sans', sans-serif;font-size:15px;font-weight:normal;color:#111;transform-origin:0 12.7px;transform:scaleY(1.08)">26,78</div>
<div class="t" style="left:313px;top:758.40px;font-family:'Liberation Sans', sans-serif;font-size:15px;font-weight:normal;color:#111;transform-origin:0 12.7px;transform:scaleY(1.08)">32,41</div>
<div class="t" style="left:388px;top:758.40px;font-family:'Liberation Sans', sans-serif;font-size:15px;font-weight:normal;color:#111;transform-origin:0 12.7px;transform:scaleY(1.08)">744,94</div>
<div style="position:absolute;left:13px;top:775.50px;width:75px;height:21.8px;background:linear-gradient(#fdfdfd,#efefef)"></div>
<div style="position:absolute;left:88px;top:796.30px;width:372px;height:1px;background:#cfcfcf"></div>
<div style="position:absolute;left:13px;top:796.30px;width:75px;height:1px;background:#8c8c8c"></div>
<div class="t" style="left:17px;top:780.39px;font-family:'Liberation Sans', sans-serif;font-size:11px;font-weight:bold;color:#111;letter-spacing:0.8px;-webkit-text-stroke:0.25px #111">48962</div>
<div class="t" style="left:91px;top:780.18px;font-family:'Liberation Sans', sans-serif;font-size:15px;font-weight:normal;color:#111;transform-origin:0 12.7px;transform:scale(0.985,1.08)">13.05.2020 13:41:55</div>
<div class="t" style="left:239.5px;top:780.18px;font-family:'Liberation Sans', sans-serif;font-size:15px;font-weight:normal;color:#111;transform-origin:0 12.7px;transform:scaleY(1.08)">26,81</div>
<div class="t" style="left:313px;top:780.18px;font-family:'Liberation Sans', sans-serif;font-size:15px;font-weight:normal;color:#111;transform-origin:0 12.7px;transform:scaleY(1.08)">32,11</div>
<div class="t" style="left:388px;top:780.18px;font-family:'Liberation Sans', sans-serif;font-size:15px;font-weight:normal;color:#111;transform-origin:0 12.7px;transform:scaleY(1.08)">744,92</div>
<div style="position:absolute;left:13px;top:797.30px;width:75px;height:21.8px;background:linear-gradient(#fdfdfd,#efefef)"></div>
<div style="position:absolute;left:88px;top:818.10px;width:372px;height:1px;background:#cfcfcf"></div>
<div style="position:absolute;left:13px;top:818.10px;width:75px;height:1px;background:#8c8c8c"></div>
<div class="t" style="left:17px;top:802.19px;font-family:'Liberation Sans', sans-serif;font-size:11px;font-weight:bold;color:#111;letter-spacing:0.8px;-webkit-text-stroke:0.25px #111">48963</div>
<div class="t" style="left:91px;top:801.96px;font-family:'Liberation Sans', sans-serif;font-size:15px;font-weight:normal;color:#111;transform-origin:0 12.7px;transform:scale(0.985,1.08)">13.05.2020 13:41:57</div>
<div class="t" style="left:239.5px;top:801.96px;font-family:'Liberation Sans', sans-serif;font-size:15px;font-weight:normal;color:#111;transform-origin:0 12.7px;transform:scaleY(1.08)">26,84</div>
<div class="t" style="left:313px;top:801.96px;font-family:'Liberation Sans', sans-serif;font-size:15px;font-weight:normal;color:#111;transform-origin:0 12.7px;transform:scaleY(1.08)">31,81</div>
<div class="t" style="left:388px;top:801.96px;font-family:'Liberation Sans', sans-serif;font-size:15px;font-weight:normal;color:#111;transform-origin:0 12.7px;transform:scaleY(1.08)">744,94</div>
<div style="position:absolute;left:13px;top:819.10px;width:75px;height:21.8px;background:linear-gradient(#fdfdfd,#efefef)"></div>
<div style="position:absolute;left:88px;top:839.90px;width:372px;height:1px;background:#cfcfcf"></div>
<div style="position:absolute;left:13px;top:839.90px;width:75px;height:1px;background:#8c8c8c"></div>
<div class="t" style="left:17px;top:823.99px;font-family:'Liberation Sans', sans-serif;font-size:11px;font-weight:bold;color:#111;letter-spacing:0.8px;-webkit-text-stroke:0.25px #111">48964</div>
<div class="t" style="left:91px;top:823.74px;font-family:'Liberation Sans', sans-serif;font-size:15px;font-weight:normal;color:#111;transform-origin:0 12.7px;transform:scale(0.985,1.08)">13.05.2020 13:41:59</div>
<div class="t" style="left:239.5px;top:823.74px;font-family:'Liberation Sans', sans-serif;font-size:15px;font-weight:normal;color:#111;transform-origin:0 12.7px;transform:scaleY(1.08)">26,83</div>
<div class="t" style="left:313px;top:823.74px;font-family:'Liberation Sans', sans-serif;font-size:15px;font-weight:normal;color:#111;transform-origin:0 12.7px;transform:scaleY(1.08)">31,50</div>
<div class="t" style="left:388px;top:823.74px;font-family:'Liberation Sans', sans-serif;font-size:15px;font-weight:normal;color:#111;transform-origin:0 12.7px;transform:scaleY(1.08)">744,92</div>
<div style="position:absolute;left:87px;top:318px;width:1px;height:523px;background:#8c8c8c"></div>
<div style="position:absolute;left:236px;top:318px;width:1px;height:523px;background:#c8c8c8"></div>
<div style="position:absolute;left:309px;top:318px;width:1px;height:523px;background:#c8c8c8"></div>
<div style="position:absolute;left:384px;top:318px;width:1px;height:523px;background:#c8c8c8"></div>
<div style="position:absolute;left:459px;top:318px;width:1px;height:523px;background:#a8a8a8"></div>
<div style="position:absolute;left:998px;top:296px;width:16px;height:545px;background:linear-gradient(90deg,#e4e4e4,#f0f0f0 50%,#eaeaea)"></div>
<svg style="position:absolute;left:1002px;top:302px" width="9" height="6"><path d="M1 4.8 L4.5 1.2 L8 4.8 Z" fill="#3a3a3a"/></svg>
</body></html>
